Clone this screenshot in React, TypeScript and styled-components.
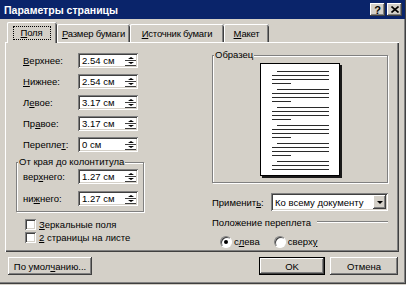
import React from 'react';
import styled, { createGlobalStyle, css } from 'styled-components';

const FACE = '#d4d0c8';
const SHADOW = '#808080';
const DARK = '#404040';
const HILITE = '#ffffff';

const GlobalStyle = createGlobalStyle`
  html, body {
    margin: 0;
    padding: 0;
    background: ${FACE};
  }
  body {
    font-family: "Liberation Sans", Arial, sans-serif;
    font-size: 9.5px;
    color: #000;
  }
  * {
    box-sizing: border-box;
  }
`;

const raised = css`
  box-shadow: inset -1px -1px ${DARK}, inset 1px 1px ${HILITE},
    inset -2px -2px ${SHADOW}, inset 2px 2px ${FACE};
`;

const sunken = css`
  box-shadow: inset 1px 1px ${SHADOW}, inset -1px -1px ${HILITE},
    inset 2px 2px ${DARK}, inset -2px -2px ${FACE};
`;

const Window = styled.div`
  width: 406px;
  height: 284px;
  background: ${FACE};
  display: flex;
  flex-direction: column;
  border-right: 1px solid ${DARK};
  border-bottom: 1px solid ${DARK};
  box-shadow: inset -1px -1px ${SHADOW};
  overflow: hidden;
`;

const TitleBar = styled.div`
  height: 19px;
  flex: none;
  background: #0a246a;
  color: #fff;
  display: flex;
  align-items: center;
  justify-content: space-between;
  padding: 0 3px 0 4px;
  font-weight: bold;
  font-size: 10.5px;
`;

const CaptionButtons = styled.div`
  display: flex;
  gap: 2px;
`;

const CaptionButton = styled.div`
  width: 15px;
  height: 13px;
  background: ${FACE};
  ${raised};
  color: #000;
  display: flex;
  align-items: center;
  justify-content: center;
  font-size: 11px;
  font-weight: bold;
`;

const Body = styled.div`
  flex: 1;
  display: flex;
  flex-direction: column;
  padding: 3px 6px 0 5px;
`;

const TabStrip = styled.div`
  height: 20px;
  display: flex;
  align-items: flex-end;
  padding-left: 2px;
  position: relative;
  z-index: 1;
`;

const Tab = styled.div<{ $w: number; $active?: boolean }>`
  width: ${(p) => p.$w}px;
  height: ${(p) => (p.$active ? 21 : 18)}px;
  margin-bottom: ${(p) => (p.$active ? -1 : 0)}px;
  padding-top: ${(p) => (p.$active ? 1 : 0)}px;
  background: ${FACE};
  border-top-left-radius: 2px;
  border-top-right-radius: 2px;
  box-shadow: inset 1px 0 ${HILITE}, inset 0 1px ${HILITE},
    inset -1px 0 ${DARK}, inset -2px 0 ${SHADOW};
  display: flex;
  align-items: center;
  justify-content: center;
  white-space: nowrap;
  letter-spacing: -0.2px;
`;

const FocusRing = styled.span`
  border: 1px dotted #000;
  padding: 0 8px 1px 7px;
`;

const Key = styled.span`
  text-decoration: underline;
`;

const Panel = styled.div`
  height: 210px;
  flex: none;
  background: ${FACE};
  box-shadow: inset 1px 1px ${HILITE}, inset -1px -1px ${DARK},
    inset -2px -2px ${SHADOW};
  display: grid;
  grid-template-columns: 207px 176px;
`;

const LeftCol = styled.div`
  display: flex;
  flex-direction: column;
  padding: 11px 0 0 11px;
`;

const RightCol = styled.div`
  display: flex;
  flex-direction: column;
  padding-top: 7px;
`;

const MainFields = styled.div`
  display: flex;
  flex-direction: column;
  gap: 6px;
  padding-left: 7px;
`;

const FieldRow = styled.div`
  display: flex;
  align-items: center;
  height: 15px;
`;

const FieldLabel = styled.span`
  width: 55px;
  white-space: nowrap;
`;

const SpinBox = styled.div`
  width: 60px;
  height: 15px;
  background: #fff;
  ${sunken};
  display: flex;
  padding: 2px;
`;

const SpinValue = styled.span`
  flex: 1;
  padding-left: 2px;
  line-height: 11px;
  white-space: nowrap;
`;

const Spinner = styled.div`
  width: 11px;
  display: flex;
  flex-direction: column;
`;

const SpinHalf = styled.div`
  flex: 1;
  display: flex;
  align-items: center;
  justify-content: center;
  box-shadow: inset 0 -1px ${DARK};
`;

const Arrow = styled.span<{ $down?: boolean; $size?: number }>`
  width: 0;
  height: 0;
  border-left: ${(p) => p.$size ?? 3}px solid transparent;
  border-right: ${(p) => p.$size ?? 3}px solid transparent;
  ${(p) =>
    p.$down
      ? `border-top: ${(p.$size ?? 3) - 0.5}px solid #000;`
      : `border-bottom: ${(p.$size ?? 3) - 0.5}px solid #000;`}
`;

const Group = styled.fieldset<{ $w: number }>`
  width: ${(p) => p.$w}px;
  margin: 0;
  padding: 0;
  min-width: 0;
  border: 1px solid ${SHADOW};
  box-shadow: inset 1px 1px ${HILITE}, 1px 1px ${HILITE};
`;

const Legend = styled.legend`
  padding: 0 1px;
  margin-left: 1px;
  line-height: 12px;
  background: ${FACE};
  white-space: nowrap;
`;

const MarginGroup = styled(Group)`
  margin-top: 4px;
`;

const GroupFields = styled.div`
  display: flex;
  flex-direction: column;
  gap: 7px;
  padding: 1px 0 5px 6px;
`;

const CheckList = styled.div`
  display: flex;
  flex-direction: column;
  margin-top: 6px;
  padding-left: 9px;
`;

const CheckRow = styled.label`
  display: flex;
  align-items: center;
  height: 13px;
  white-space: nowrap;
`;

const CheckBox = styled.span`
  width: 11px;
  height: 11px;
  background: #fff;
  ${sunken};
  margin-right: 3px;
`;

const PreviewBody = styled.div`
  display: flex;
  justify-content: center;
  padding: 2px 0 6px;
`;

const Page = styled.div`
  width: 80px;
  height: 113px;
  background: #fff;
  border: 1px solid #000;
  box-shadow: 2px 2px 0 #1a1a1a;
  padding: 7px 10px 0 11px;
  overflow: hidden;
  display: flex;
  flex-direction: column;
  gap: 5px;
`;

const Paragraph = styled.div`
  display: flex;
  flex-direction: column;
  gap: 3px;
`;

const TextLine = styled.div<{ $kind?: 'first' | 'last' }>`
  height: 1px;
  background: #2a2a2a;
  margin-left: ${(p) => (p.$kind === 'first' ? 5 : 0)}px;
  width: ${(p) => (p.$kind === 'last' ? '19px' : 'auto')};
`;

const ApplyRow = styled.div`
  display: flex;
  align-items: center;
  margin-top: 10px;
  height: 18px;
`;

const ApplyLabel = styled.span`
  width: 59px;
  white-space: nowrap;
`;

const Select = styled.div`
  width: 117px;
  height: 18px;
  background: #fff;
  ${sunken};
  display: flex;
  align-items: center;
  padding: 2px;
`;

const SelectText = styled.span`
  flex: 1;
  padding-left: 2px;
  white-space: nowrap;
`;

const DropButton = styled.div`
  width: 13px;
  height: 14px;
  background: ${FACE};
  ${raised};
  display: flex;
  align-items: center;
  justify-content: center;
`;

const SectionTitle = styled.div`
  display: flex;
  align-items: center;
  margin-top: 5px;
  height: 12px;
  white-space: nowrap;
`;

const EtchedLine = styled.div`
  flex: 1;
  height: 2px;
  margin-left: 6px;
  border-top: 1px solid ${SHADOW};
  border-bottom: 1px solid ${HILITE};
`;

const RadioRow = styled.div`
  display: flex;
  align-items: center;
  gap: 14px;
  margin-top: 7px;
  height: 13px;
  padding-left: 8px;
`;

const RadioItem = styled.label`
  display: flex;
  align-items: center;
  gap: 2px;
  white-space: nowrap;
`;

const Radio = styled.span<{ $on?: boolean }>`
  width: 12px;
  height: 12px;
  border-radius: 50%;
  background: #fff;
  border: 1px solid;
  border-color: ${SHADOW} ${HILITE} ${HILITE} ${SHADOW};
  box-shadow: inset 1px 1px ${DARK};
  display: flex;
  align-items: center;
  justify-content: center;

  &::after {
    content: '';
    width: 4px;
    height: 4px;
    border-radius: 50%;
    background: ${(p) => (p.$on ? '#000' : 'transparent')};
  }
`;

const Footer = styled.div`
  display: flex;
  align-items: center;
  margin-top: 5px;
  padding: 0 1px 0 3px;
`;

const Button = styled.div<{ $w: number; $default?: boolean }>`
  width: ${(p) => p.$w}px;
  height: 18px;
  background: ${FACE};
  display: flex;
  align-items: center;
  justify-content: center;
  white-space: nowrap;
  ${(p) =>
    p.$default
      ? css`
          border: 1px solid #000;
          box-shadow: inset -1px -1px ${DARK}, inset 1px 1px ${HILITE},
            inset -2px -2px ${SHADOW};
        `
      : raised};
`;

const Spacer = styled.div`
  flex: 1;
`;

const ButtonGap = styled.div`
  width: 5px;
`;

const CloseIcon = () => (
  <svg width="8" height="7" viewBox="0 0 8 7">
    <path d="M0.5 0.5 L7.5 6.5 M7.5 0.5 L0.5 6.5" stroke="#000" strokeWidth="1.6" />
  </svg>
);

type Field = { label: React.ReactNode; value: string };

const mainFields: Field[] = [
  { label: <><Key>В</Key>ерхнее:</>, value: '2.54 см' },
  { label: <><Key>Н</Key>ижнее:</>, value: '2.54 см' },
  { label: <>Л<Key>е</Key>вое:</>, value: '3.17 см' },
  { label: <>Пр<Key>а</Key>вое:</>, value: '3.17 см' },
  { label: <>Перепле<Key>т</Key>:</>, value: '0 см' },
];

const headerFields: Field[] = [
  { label: <>вер<Key>х</Key>него:</>, value: '1.27 см' },
  { label: <>ни<Key>ж</Key>него:</>, value: '1.27 см' },
];

const tabs = [
  { key: 'П', rest: 'оля', w: 50, active: true },
  { key: 'Р', rest: 'азмер бумаги', w: 73 },
  { key: 'И', rest: 'сточник бумаги', w: 94 },
  { key: 'М', rest: 'акет', w: 45 },
];

const SpinField = ({ label, value }: Field) => (
  <FieldRow>
    <FieldLabel>{label}</FieldLabel>
    <SpinBox>
      <SpinValue>{value}</SpinValue>
      <Spinner>
        <SpinHalf>
          <Arrow />
        </SpinHalf>
        <SpinHalf>
          <Arrow $down />
        </SpinHalf>
      </Spinner>
    </SpinBox>
  </FieldRow>
);

const PagePreview = () => (
  <Page>
    {[0, 1, 2, 3, 4].map((i) => (
      <Paragraph key={i}>
        <TextLine $kind="first" />
        <TextLine />
        <TextLine />
        <TextLine $kind="last" />
      </Paragraph>
    ))}
    <Paragraph>
      <TextLine $kind="first" />
      <TextLine />
      <TextLine />
    </Paragraph>
  </Page>
);

const App = () => {
  return (
    <>
      <GlobalStyle />
      <Window>
        <TitleBar>
          <span>Параметры страницы</span>
          <CaptionButtons>
            <CaptionButton>?</CaptionButton>
            <CaptionButton>
              <CloseIcon />
            </CaptionButton>
          </CaptionButtons>
        </TitleBar>

        <Body>
          <TabStrip>
            {tabs.map((t) => (
              <Tab key={t.rest} $w={t.w} $active={t.active}>
                {t.active ? (
                  <FocusRing>
                    <Key>{t.key}</Key>
                    {t.rest}
                  </FocusRing>
                ) : (
                  <span>
                    <Key>{t.key}</Key>
                    {t.rest}
                  </span>
                )}
              </Tab>
            ))}
          </TabStrip>

          <Panel>
            <LeftCol>
              <MainFields>
                {mainFields.map((f, i) => (
                  <SpinField key={i} {...f} />
                ))}
              </MainFields>

              <MarginGroup $w={128}>
                <Legend>От края до колонтитула</Legend>
                <GroupFields>
                  {headerFields.map((f, i) => (
                    <SpinField key={i} {...f} />
                  ))}
                </GroupFields>
              </MarginGroup>

              <CheckList>
                <CheckRow>
                  <CheckBox />
                  <span>
                    <Key>З</Key>еркальные поля
                  </span>
                </CheckRow>
                <CheckRow>
                  <CheckBox />
                  <span>
                    <Key>2</Key> страницы на листе
                  </span>
                </CheckRow>
              </CheckList>
            </LeftCol>

            <RightCol>
              <Group $w={176}>
                <Legend>Образец</Legend>
                <PreviewBody>
                  <PagePreview />
                </PreviewBody>
              </Group>

              <ApplyRow>
                <ApplyLabel>
                  Применит<Key>ь</Key>:
                </ApplyLabel>
                <Select>
                  <SelectText>Ко всему документу</SelectText>
                  <DropButton>
                    <Arrow $down $size={3.5} />
                  </DropButton>
                </Select>
              </ApplyRow>

              <SectionTitle>
                Положение переплета
                <EtchedLine />
              </SectionTitle>

              <RadioRow>
                <RadioItem>
                  <Radio $on />
                  <span>
                    с<Key>л</Key>ева
                  </span>
                </RadioItem>
                <RadioItem>
                  <Radio />
                  <span>
                    сверх<Key>у</Key>
                  </span>
                </RadioItem>
              </RadioRow>
            </RightCol>
          </Panel>

          <Footer>
            <Button $w={84}>
              По умол<Key>ч</Key>анию...
            </Button>
            <Spacer />
            <Button $w={66} $default>
              OK
            </Button>
            <ButtonGap />
            <Button $w={68}>Отмена</Button>
          </Footer>
        </Body>
      </Window>
    </>
  );
};

export default App;
